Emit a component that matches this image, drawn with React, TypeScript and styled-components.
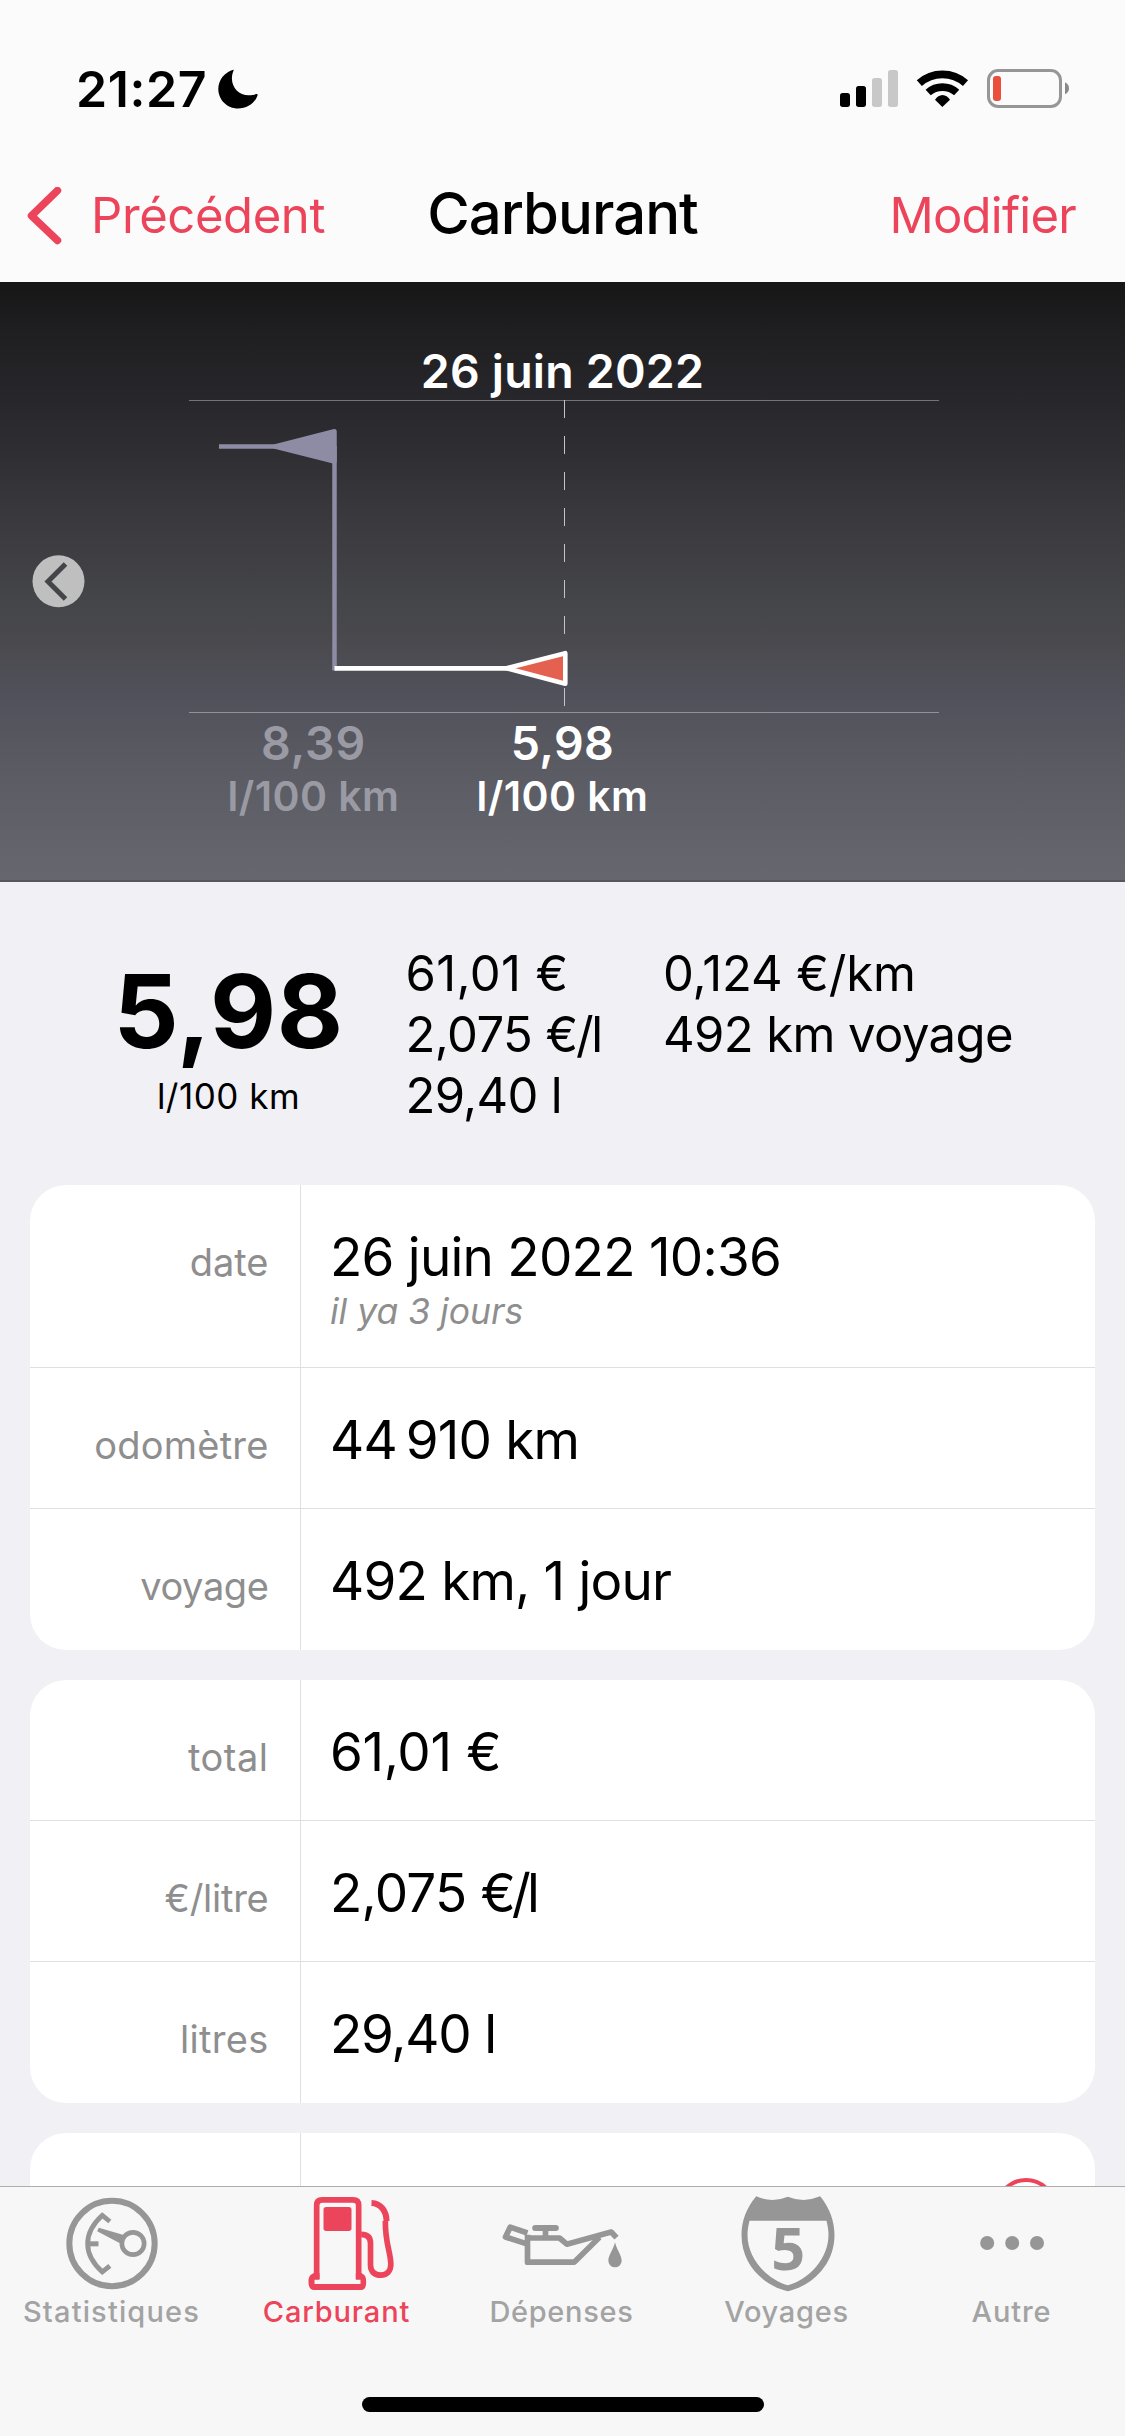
import React from "react";
import styled, { createGlobalStyle } from "styled-components";

const accent = "#ec445a";
const iconGray = "#969696";

const GlobalStyle = createGlobalStyle`
  *, *::before, *::after { box-sizing: border-box; }
  body { margin: 0; background: #f1f0f5; }
`;

const Screen = styled.div`
  display: flex;
  flex-direction: column;
  width: 1125px;
  height: 2436px;
  overflow: hidden;
  background: #f1f0f5;
  color: #000;
  font-family: Inter, "Liberation Sans", sans-serif;
  font-weight: 400;
`;

const Text = styled.span<{ $track?: number }>`
  white-space: pre;
  letter-spacing: ${(p) => p.$track ?? 0}px;
`;

/* Status bar */

const Header = styled.header`
  flex: none;
  height: 282px;
  background: #fbfbfc;
`;

const StatusBar = styled.div`
  display: flex;
  align-items: center;
  justify-content: space-between;
  height: 138px;
  padding: 40px 55px 0 76px;
`;

const Clock = styled.div`
  display: flex;
  align-items: center;
  gap: 11px;
  font-size: 50px;
  font-weight: 600;
  line-height: 60px;
`;

const NavBar = styled.nav`
  display: grid;
  grid-template-columns: 1fr auto 1fr;
  align-items: center;
  height: 144px;
  padding: 12px 49px 0 27px;
`;

const NavLink = styled.a<{ $end?: boolean }>`
  display: flex;
  align-items: center;
  justify-self: ${(p) => (p.$end ? "end" : "start")};
  gap: 29px;
  color: ${accent};
  font-size: 49px;
  line-height: 60px;
`;

const NavTitle = styled.h1`
  margin: -7px 0 0 22px;
  font-size: 58px;
  font-weight: 500;
  line-height: 70px;
`;

/* Chart */

const Chart = styled.section`
  flex: none;
  height: 600px;
  padding-top: 59px;
  border-bottom: 2px solid #57565e;
  color: #fff;
  font-weight: 600;
  background: linear-gradient(
    #161617 0,
    #1f1f21 50px,
    #252529 100px,
    #2e2d32 165px,
    #3c3b40 250px,
    #444548 315px,
    #4a4a4e 360px,
    #50505a 408px,
    #5a5a63 480px,
    #66666f 590px
  );
`;

const ChartTitle = styled.h2`
  margin: 0;
  font-size: 46.5px;
  font-weight: 600;
  line-height: 60px;
  text-align: center;
`;

const ChartBody = styled.div`
  display: grid;
  grid-template-columns: 189px 750px;
  height: 315px;
  margin-top: -2px;
`;

const PreviousButton = styled.button`
  display: block;
  width: 54px;
  height: 54px;
  margin: 155px 0 0 31px;
  padding: 0;
  border: 0;
  background: none;
`;

const ChartLabels = styled.div`
  display: grid;
  grid-template-columns: 249px 249px;
  padding: 2.5px 0 0 189px;
`;

const ChartLabel = styled.div<{ $dim?: boolean }>`
  display: flex;
  flex-direction: column;
  align-items: center;
  color: ${(p) => (p.$dim ? "#9a9aa4" : "#fff")};
  font-size: 46.5px;
  line-height: 53px;
`;

const ChartUnit = styled(Text)`
  font-size: 41px;
`;

/* Summary */

const Summary = styled.section`
  flex: none;
  display: grid;
  grid-template-columns: 257px 209px 1fr;
  column-gap: 48.5px;
  height: 303px;
  padding: 60.7px 0 0 100px;
`;

const Headline = styled.div`
  display: flex;
  flex-direction: column;
  align-items: center;
  padding-top: 6.3px;
`;

const HeadlineValue = styled(Text)`
  font-size: 102px;
  font-weight: 700;
  line-height: 124px;
`;

const HeadlineUnit = styled(Text)`
  font-size: 35px;
  line-height: 46px;
`;

const Figures = styled.div`
  display: flex;
  flex-direction: column;
  font-size: 49px;
  line-height: 61px;
`;

/* Cards */

const Cards = styled.main`
  flex: 1;
  min-height: 0;
  display: flex;
  flex-direction: column;
  gap: 30px;
  padding: 0 30px;
  overflow: hidden;
`;

const Card = styled.section`
  flex: none;
  overflow: hidden;
  border-radius: 36px;
  background: #fff;
`;

const Row = styled.div<{ $height?: number }>`
  display: grid;
  grid-template-columns: 270px 1fr;
  height: ${(p) => p.$height ?? 141}px;
  &:not(:last-child) { border-bottom: 1px solid #dfdfe3; }
`;

const RowLabel = styled.div`
  padding: 45px 31.5px 0 0;
  color: #8e8e8e;
  font-size: 38px;
  line-height: 64px;
  text-align: right;
`;

const RowValue = styled.div`
  display: flex;
  flex-direction: column;
  padding: 40px 0 0 29px;
  border-left: 1px solid #e0e0e3;
  font-size: 53px;
  line-height: 64px;
`;

const RowNote = styled(Text)`
  color: #8e8e8e;
  font-size: 35.5px;
  font-style: italic;
  line-height: 45px;
`;

const RoundAction = styled.span`
  align-self: flex-end;
  width: 62px;
  height: 62px;
  margin: 5px 38px 0 0;
  border: 4.5px solid ${accent};
  border-radius: 50%;
`;

/* Tab bar */

const TabBar = styled.footer`
  flex: none;
  height: 250px;
  border-top: 1px solid #adadae;
  background: #f7f7f7;
`;

const Tabs = styled.div`
  display: grid;
  grid-template-columns: repeat(5, 225px);
  padding-top: 6px;
`;

const Tab = styled.a<{ $active?: boolean }>`
  display: flex;
  flex-direction: column;
  align-items: center;
  color: ${(p) => (p.$active ? accent : "#a3a3a3")};
  font-size: 29px;
  font-weight: 500;
  line-height: 37px;
`;

const TabLabel = styled(Text)`
  margin-left: -2px;
`;

const TabIcon = styled.svg`
  width: 130px;
  height: 100px;
`;

const HomeIndicator = styled.div`
  width: 402px;
  height: 15px;
  margin: 67px 0 0 362px;
  border-radius: 8px;
  background: #000;
`;

const MoonIcon = () => (
  <svg width="40" height="40" viewBox="218.4 69.5 40 40">
    <path d="M233.6 70.2C224.6 73 218.7 80.600 218.700 89.500C218.700 100.300 227.500 109 238.400 109C247.500 109 255.400 103.800 258 95.800C258.300 94.800 257.600 94.300 256.700 94.600C254.500 95.400 251.500 95.900 249 95.800C239.500 95.600 232.400 88.500 232.300 79C232.300 76.500 232.900 73.500 233.900 71.200C234.200 70.500 234 70.100 233.600 70.200Z" />
  </svg>
);

const StatusIcons = () => (
  <svg width="230" height="44" viewBox="60 51 690 132">
    <rect x="60" y="129" width="30" height="42" rx="8" />
    <rect x="108" y="108" width="30" height="63" rx="8" />
    <rect x="156" y="84" width="30" height="87" rx="8" fill="#c8c8c8" />
    <rect x="204" y="60" width="30" height="111" rx="8" fill="#c8c8c8" />
    <g fill="none" stroke="#000" strokeWidth="23">
      <path d="M298 99.500A104 104 0 0 1 436.500 99.500" />
      <path d="M324.500 127.500A64 64 0 0 1 410 127.500" />
    </g>
    <path d="M367 171L345 149Q354 136 367.500 135Q381 136 390 149Z" />
    <rect x="505.500" y="61.500" width="216" height="108" rx="29" fill="none" stroke="#969697" strokeWidth="9" />
    <rect x="519" y="78" width="24" height="75" rx="9" fill="#eb4e3d" />
    <path d="M735 97Q747 103 747 115Q747 127 735 133Z" fill="#8a8a8a" />
  </svg>
);

const BackChevron = () => (
  <svg width="35" height="58" viewBox="27 187 35 58">
    <path d="M57.500 190.500L31.500 215.700L57.500 240.500" fill="none" stroke={accent} strokeWidth="7.500" strokeLinecap="round" strokeLinejoin="round" />
  </svg>
);

const PreviousIcon = () => (
  <svg width="54" height="54" viewBox="31 554 54 54">
    <circle cx="58.500" cy="581.300" r="26" fill="#bfbfbf" />
    <path d="M65.500 564L48 581.500L65.500 599" fill="none" stroke="#444549" strokeWidth="5" />
  </svg>
);

const ConsumptionPlot = () => (
  <svg width="750" height="315" viewBox="189 399 750 315">
    <path d="M189 400.500H939M189 712.500H939" stroke="#fff" strokeOpacity=".36" />
    <path d="M564.500 400V712" stroke="#c4c4c6" strokeDasharray="18 18" />
    <g fill="#8d8ca4" stroke="#8d8ca4" strokeWidth="4.500">
      <path d="M219 446.500H276M334.500 446V670.500" fill="none" />
      <path d="M275 446.500L334.500 431.200V461.500Z" strokeLinejoin="round" />
    </g>
    <path d="M334.500 668.300H507" stroke="#fff" strokeWidth="4.800" />
    <path d="M506.500 668.300L565.300 653.200V683.800Z" fill="#e4614f" stroke="#fff" strokeWidth="4.600" strokeLinejoin="round" />
  </svg>
);

const GaugeIcon = () => (
  <TabIcon viewBox="-7.500 39 390 300">
    <g fill="none" stroke={iconGray}>
      <circle cx="184.500" cy="190.500" r="128" strokeWidth="18" />
      <path d="M178 124.500L155.500 106Q111.500 146 111.500 191Q111.500 236 155.500 275.500L178 257.500" strokeWidth="14.500" />
      <path d="M112 191.500H144" strokeWidth="15" />
      <circle cx="247.500" cy="190.500" r="33.500" strokeWidth="14" />
    </g>
    <path d="M145 143L222 166L207 189L140 154Z" fill={iconGray} />
  </TabIcon>
);

const PumpIcon = () => (
  <TabIcon viewBox="667.500 39 390 300">
    <g fill="none" stroke={accent} strokeWidth="17">
      <path d="M798.500 299V76Q798.500 59.500 815 59.500H908Q924.500 59.500 924.500 76V299" />
      <path d="M932 163C950 163 960 172 960 190V255C960 275 972 285.500 991 285.500C1010 285.500 1021 272 1021 252C1020 215 1004 190 1004.500 123" />
      <path d="M963 69C990 70 1008 92 1008 123" strokeWidth="18" />
    </g>
    <path fill={accent} d="M790 279C778 284 774 292 774 305C774 320 779 330 790 330H932C943 330 947 320 947 305C947 292 944 284 932 279L916 279V297H930V312H792V297H807V279Z" />
    <rect x="819" y="81" width="84" height="72" rx="8" fill={accent} />
  </TabIcon>
);

const OilIcon = () => (
  <TabIcon viewBox="22.500 39 390 300">
    <g fill="none" stroke={iconGray} strokeWidth="17" strokeLinejoin="round">
      <path d="M111 159L59 141.500L45 171L109 191.500" />
      <path d="M111 164V246.500H251L327 172" />
      <path d="M111 174H207L229 192.500L362 156L378 173" />
      <path d="M165 150V172" strokeLinejoin="miter" />
    </g>
    <rect x="125" y="135" width="80" height="18" rx="9" fill={iconGray} />
    <path d="M373.500 187C378 208 393.500 226 393.500 242A20 20 0 0 1 353.500 242C353.500 226 369 208 373.500 187Z" fill={iconGray} />
  </TabIcon>
);

const RouteDigit = styled.text`
  font-family: "Open Sans", sans-serif;
  font-size: 178px;
  font-weight: 700;
  text-anchor: middle;
`;

const ShieldIcon = () => (
  <TabIcon viewBox="697.500 39 390 300" fill={iconGray}>
    <path fillRule="evenodd" d="M797 49Q845 70 892 50Q940 70 989 49C1018 85 1032 125 1032 165C1032 250 970 315 892 334C814 315 753 250 753 165C753 125 767 85 797 49ZM777 122C773 140 771 150 771 165C771 235 828 298 892 316C956 298 1014 235 1014 165C1014 150 1012 140 1008 122Z" />
    <RouteDigit x="893" y="270">5</RouteDigit>
  </TabIcon>
);

const MoreIcon = () => (
  <TabIcon viewBox="0 0 130 100" fill={iconGray}>
    <circle cx="39.200" cy="50" r="7" />
    <circle cx="64.200" cy="50" r="7" />
    <circle cx="89" cy="50" r="7" />
  </TabIcon>
);

type Entry = {
  label: string;
  labelTrack: number;
  value: string;
  track: number;
  unit?: string;
  note?: string;
  height?: number;
};

const trip: Entry[] = [
  { label: "date", labelTrack: 0, value: "26 juin 2022 10:36", track: -0.75, note: "il ya 3 jours", height: 183 },
  { label: "odomètre", labelTrack: 0.2, value: "44\u202f910 km", track: -0.8 },
  { label: "voyage", labelTrack: -0.4, value: "492 km, 1 jour", track: -0.8 },
];

const cost: Entry[] = [
  { label: "total", labelTrack: 0.5, value: "61,01 €", track: -0.35 },
  { label: "€/litre", labelTrack: -0.25, value: "2,075 ", track: -0.8, unit: "€/l" },
  { label: "litres", labelTrack: 0.3, value: "29,40 l", track: -1.25 },
];

const EntryCard = ({ entries }: { entries: Entry[] }) => (
  <Card>
    {entries.map((e) => (
      <Row key={e.label} $height={e.height}>
        <RowLabel><Text $track={e.labelTrack}>{e.label}</Text></RowLabel>
        <RowValue>
          <Text $track={e.track}>{e.value}{e.unit && <Text $track={-4}>{e.unit}</Text>}</Text>
          {e.note && <RowNote>{e.note}</RowNote>}
        </RowValue>
      </Row>
    ))}
  </Card>
);

const tabs = [
  { name: "Statistiques", track: 1.15, Icon: GaugeIcon },
  { name: "Carburant", track: 0.85, Icon: PumpIcon, active: true },
  { name: "Dépenses", track: 0.7, Icon: OilIcon },
  { name: "Voyages", track: 0.7, Icon: ShieldIcon },
  { name: "Autre", track: 0.85, Icon: MoreIcon },
];

export default function App() {
  return (
    <Screen>
      <GlobalStyle />
      <Header>
        <StatusBar>
          <Clock><Text $track={0.6}>21:27</Text><MoonIcon /></Clock>
          <StatusIcons />
        </StatusBar>
        <NavBar>
          <NavLink><BackChevron /><Text $track={-0.4}>Précédent</Text></NavLink>
          <NavTitle><Text $track={-0.95}>Carburant</Text></NavTitle>
          <NavLink $end><Text $track={-0.75}>Modifier</Text></NavLink>
        </NavBar>
      </Header>

      <Chart>
        <ChartTitle><Text $track={0.2}>26 juin 2022</Text></ChartTitle>
        <ChartBody>
          <PreviousButton><PreviousIcon /></PreviousButton>
          <ConsumptionPlot />
        </ChartBody>
        <ChartLabels>
          <ChartLabel $dim><Text $track={0.8}>8,39</Text><ChartUnit $track={0.45}>l/100 km</ChartUnit></ChartLabel>
          <ChartLabel><Text $track={0.4}>5,98</Text><ChartUnit $track={0.45}>l/100 km</ChartUnit></ChartLabel>
        </ChartLabels>
      </Chart>

      <Summary>
        <Headline>
          <HeadlineValue $track={0.4}>5,98</HeadlineValue>
          <HeadlineUnit $track={0.5}>l/100 km</HeadlineUnit>
        </Headline>
        <Figures>
          <Text $track={0.35}>61,01 €</Text>
          <Text $track={-0.6}>2,075 <Text $track={-2.2}>€/l</Text></Text>
          <Text $track={-0.7}>29,40 l</Text>
        </Figures>
        <Figures>
          <Text $track={-0.15}>0,124 €/km</Text>
          <Text $track={-0.6}>492 km voyage</Text>
        </Figures>
      </Summary>

      <Cards>
        <EntryCard entries={trip} />
        <EntryCard entries={cost} />
        <Card>
          <Row><RowLabel /><RowValue><RoundAction /></RowValue></Row>
        </Card>
      </Cards>

      <TabBar>
        <Tabs>
          {tabs.map(({ name, track, Icon, active }) => (
            <Tab key={name} $active={active}><Icon /><TabLabel $track={track}>{name}</TabLabel></Tab>
          ))}
        </Tabs>
        <HomeIndicator />
      </TabBar>
    </Screen>
  );
}
